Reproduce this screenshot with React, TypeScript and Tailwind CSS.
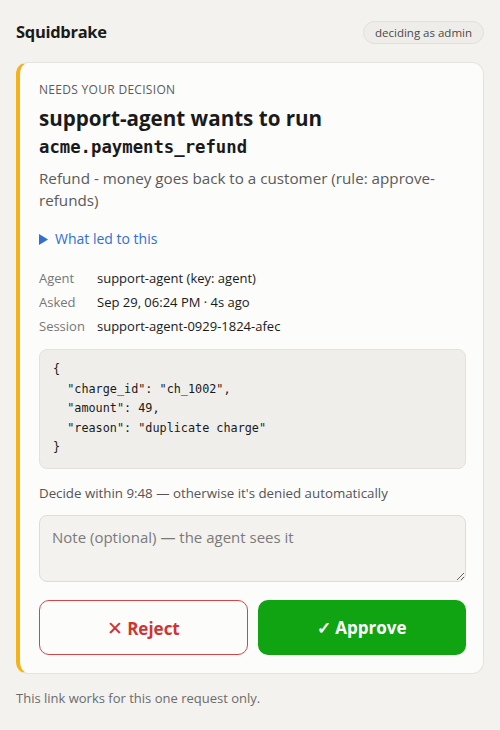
import React from 'react';

const sans = { fontFamily: '"Open Sans", "Noto Sans", sans-serif' };
const mono = '[font-family:"DejaVu_Sans_Mono","Liberation_Mono",monospace]';

const meta: [string, string][] = [
  ['Agent', 'support-agent (key: agent)'],
  ['Asked', 'Sep 29, 06:24 PM · 4s ago'],
  ['Session', 'support-agent-0929-1824-afec'],
];

const payload = `{
  "charge_id": "ch_1002",
  "amount": 49,
  "reason": "duplicate charge"
}`;

const App: React.FC = () => {
  return (
    <div className="min-h-[730px] bg-[#f4f2ef] px-4 pt-[21px] text-[#1a1a1a]" style={sans}>
      <header className="flex items-center justify-between h-[23px]">
        <h1 className="text-[16.5px] font-bold tracking-[-0.3px]">Squidbrake</h1>
        <span className="rounded-full border border-[#e2dfda] bg-[#efede9] px-[11px] py-[2px] text-[11.5px] text-[#4a4a4a]">
          deciding as admin
        </span>
      </header>

      <div className="mt-[18px] rounded-[12px] border border-[#e6e3de] border-l-4 border-l-[#f6b21b] bg-[#fcfcfb] pl-[19px] pr-[17px] pt-[18px] pb-[18px]">
        <div className="text-[12px] uppercase tracking-[0.3px] text-[#5b5b5b]">Needs your decision</div>
        <h2 className="mt-[6px] text-[20.6px] font-bold leading-[26px]">support-agent wants to run</h2>
        <div className={`mt-[4px] text-[17.3px] font-bold leading-[24px] ${mono}`}>acme.payments_refund</div>
        <p className="mt-[8px] text-[15.2px] leading-[22px] text-[#5a5a5a]">
          Refund - money goes back to a customer (rule: approve-refunds)
        </p>

        <div className="mt-[17px] flex items-center gap-[7px] text-[14px] text-[#2f6fd6]">
          <svg width="9" height="11" viewBox="0 0 9 11" className="mt-[1px]">
            <path d="M0 0 L9 5.5 L0 11 Z" fill="#2f6fd6" />
          </svg>
          <span>What led to this</span>
        </div>

        <div className="mt-[20px] flex flex-col gap-[5px] text-[13px]">
          {meta.map(([label, value]) => (
            <div key={label} className="flex leading-[19px]">
              <span className="w-[58px] text-[#777]">{label}</span>
              <span className="text-[#1a1a1a]">{value}</span>
            </div>
          ))}
        </div>

        <pre
          className={`mt-[13px] rounded-[8px] border border-[#e4e1dc] bg-[#efeeeb] px-[13px] py-[10px] text-[11.8px] leading-[19.5px] text-[#1a1a1a] ${mono}`}
        >
          {payload}
        </pre>

        <div className="mt-[15px] text-[13.3px] text-[#555]">
          Decide within 9:48 — otherwise it's denied automatically
        </div>

        <textarea
          placeholder="Note (optional) — the agent sees it"
          className="mt-[12px] block h-[67px] w-full rounded-[8px] border border-[#dfdcd7] bg-[#f3f2ef] px-[12px] py-[10px] text-[15px] placeholder:text-[#7a7a7a] outline-none"
          style={sans}
        />

        <div className="mt-[18px] grid grid-cols-2 gap-[10px]">
          <button
            className="h-[55px] rounded-[10px] border border-[#d64545] bg-[#fcfcfb] text-[17px] font-bold text-[#cf3434]"
            style={sans}
          >
            <span className="font-normal text-[19px]">✕</span> Reject
          </button>
          <button
            className="h-[55px] rounded-[10px] bg-[#10a312] text-[17px] font-bold text-white"
            style={sans}
          >
            ✓ Approve
          </button>
        </div>
      </div>

      <p className="mt-[15px] text-[13px] text-[#6b6b6b]">This link works for this one request only.</p>
    </div>
  );
};

export default App;
